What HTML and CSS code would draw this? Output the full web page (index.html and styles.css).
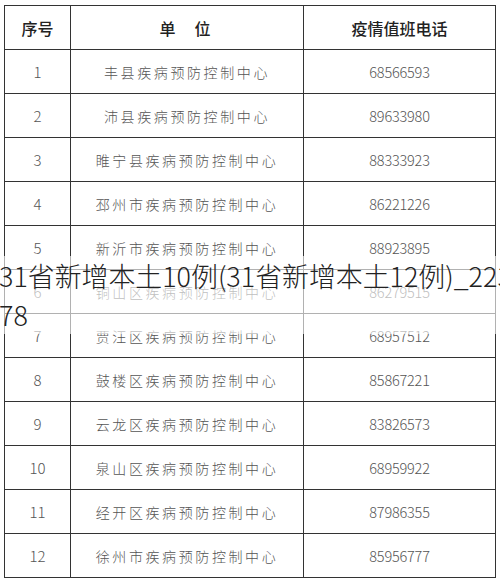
FILE: index.html
```html
<!DOCTYPE html>
<html lang="zh">
<head>
<meta charset="utf-8">
<link rel="stylesheet" href="styles.css">
</head>
<body>
<div class="page">
  <table class="duty">
    <colgroup>
      <col class="c-no">
      <col class="c-unit">
      <col class="c-tel">
    </colgroup>
    <thead>
      <tr><th>序号</th><th class="spread">单&nbsp;&nbsp;位</th><th>疫情值班电话</th></tr>
    </thead>
    <tbody>
      <tr><td class="no">1</td><td class="unit">丰县疾病预防控制中心</td><td class="tel">68566593</td></tr>
      <tr><td class="no">2</td><td class="unit">沛县疾病预防控制中心</td><td class="tel">89633980</td></tr>
      <tr><td class="no">3</td><td class="unit">睢宁县疾病预防控制中心</td><td class="tel">88333923</td></tr>
      <tr><td class="no">4</td><td class="unit">邳州市疾病预防控制中心</td><td class="tel">86221226</td></tr>
      <tr><td class="no">5</td><td class="unit">新沂市疾病预防控制中心</td><td class="tel">88923895</td></tr>
      <tr><td class="no">6</td><td class="unit">铜山区疾病预防控制中心</td><td class="tel">86279515</td></tr>
      <tr><td class="no">7</td><td class="unit">贾汪区疾病预防控制中心</td><td class="tel">68957512</td></tr>
      <tr><td class="no">8</td><td class="unit">鼓楼区疾病预防控制中心</td><td class="tel">85867221</td></tr>
      <tr><td class="no">9</td><td class="unit">云龙区疾病预防控制中心</td><td class="tel">83826573</td></tr>
      <tr><td class="no">10</td><td class="unit">泉山区疾病预防控制中心</td><td class="tel">68959922</td></tr>
      <tr><td class="no">11</td><td class="unit">经开区疾病预防控制中心</td><td class="tel">87986355</td></tr>
      <tr><td class="no">12</td><td class="unit">徐州市疾病预防控制中心</td><td class="tel">85956777</td></tr>
    </tbody>
  </table>
  <div class="caption">31省新增本土10例(31省新增本土12例)_22378</div>
</div>
</body>
</html>
```

FILE: styles.css
```css
html, body {
  margin: 0;
  padding: 0;
  background: #ffffff;
  overflow: hidden;
}

.page {
  position: relative;
  width: 500px;
  height: 581px;
  overflow: hidden;
  padding: 5px 0 0 4px;
  box-sizing: border-box;
}

.duty {
  border-collapse: collapse;
  width: 491px;
  table-layout: fixed;
  font-family: "Noto Sans CJK SC", "Noto Sans", sans-serif;
  color: #555555;
}

.c-no { width: 66px; }
.c-unit { width: 233px; }
.c-tel { width: 192px; }

.duty th,
.duty td {
  border: 1.5px solid #333333;
  height: 44px;
  padding: 0;
  text-align: center;
  vertical-align: middle;
  box-sizing: border-box;
}

.duty th {
  font-size: 16px;
  font-weight: 500;
  color: #222222;
}

.duty th.spread {
  letter-spacing: 4px;
}

.duty td.no {
  font-size: 15px;
  font-weight: 300;
}

.duty td.unit {
  font-size: 14px;
  letter-spacing: 2.6px;
  font-weight: 300;
}

.duty td.tel {
  font-size: 14.5px;
  font-weight: 300;
  letter-spacing: -0.2px;
}

.caption {
  position: absolute;
  top: 256px;
  left: -1px;
  width: 516px;
  font-family: "Noto Sans CJK SC", "Noto Sans", sans-serif;
  font-size: 26.9px;
  font-weight: 300;
  line-height: 39px;
  color: #222222;
  background: rgba(255, 255, 255, 0.62);
  word-break: break-all;
}
```
